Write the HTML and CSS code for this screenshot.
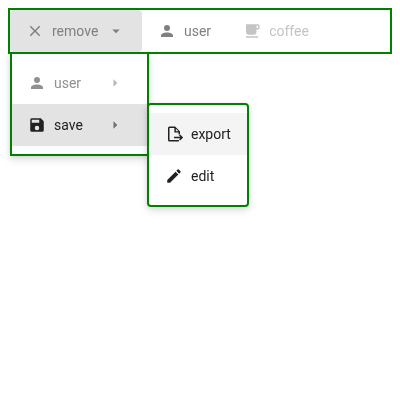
FILE: index.html
```
<!DOCTYPE html>
<html lang="en">
<head>
<meta charset="utf-8">
<title>Menu</title>
<link rel="stylesheet" href="styles.css">
</head>
<body>
<nav class="toolbar">
  <div class="item item--active">
    <svg class="icon" viewBox="0 0 24 24"><path d="M19 6.41L17.59 5 12 10.59 6.41 5 5 6.41 10.59 12 5 17.59 6.41 19 12 13.41 17.59 19 19 17.59 13.41 12z"/></svg>
    <span class="label">remove</span>
    <svg class="icon caret" viewBox="0 0 24 24"><path d="M7 10l5 5 5-5z"/></svg>
  </div>
  <div class="item">
    <svg class="icon" viewBox="0 0 24 24"><path d="M12 4a4 4 0 1 1 0 8 4 4 0 0 1 0-8m0 10c4.42 0 8 1.79 8 4v2H4v-2c0-2.21 3.58-4 8-4z"/></svg>
    <span class="label">user</span>
  </div>
  <div class="item item--disabled">
    <svg class="icon" viewBox="0 0 24 24"><path d="M4 19h16v2H4zM20 3H4v10a4 4 0 0 0 4 4h6a4 4 0 0 0 4-4v-3h2a2 2 0 0 0 2-2V5a2 2 0 0 0-2-2m0 5h-2V5h2z"/></svg>
    <span class="label">coffee</span>
  </div>
</nav>
<div class="menu menu--main">
  <div class="item item--muted">
    <svg class="icon" viewBox="0 0 24 24"><path d="M12 4a4 4 0 1 1 0 8 4 4 0 0 1 0-8m0 10c4.42 0 8 1.79 8 4v2H4v-2c0-2.21 3.58-4 8-4z"/></svg>
    <span class="label">user</span>
    <svg class="icon arrow" viewBox="0 0 24 24"><path d="M10 17l5-5-5-5z"/></svg>
  </div>
  <div class="item item--open">
    <svg class="icon" viewBox="0 0 24 24"><path d="M15 9H5V5h10m-3 14a3 3 0 1 1 0-6 3 3 0 0 1 0 6m5-16H5a2 2 0 0 0-2 2v14a2 2 0 0 0 2 2h14a2 2 0 0 0 2-2V7z"/></svg>
    <span class="label">save</span>
    <svg class="icon arrow" viewBox="0 0 24 24"><path d="M10 17l5-5-5-5z"/></svg>
  </div>
</div>
<div class="menu menu--sub">
  <div class="item item--hover">
    <svg class="icon" viewBox="0 0 24 24"><path d="M6 2a2 2 0 0 0-2 2v16a2 2 0 0 0 2 2h12.5v-2H6V4h6.5v6H18v2.5h2V8.5L13.5 2zM14.5 5L17.8 8.2H14.5zM20.2 12.5l-1.4 1.4 1.6 1.6H12v2h8.4l-1.6 1.6 1.4 1.4 4-4z"/></svg>
    <span class="label">export</span>
  </div>
  <div class="item">
    <svg class="icon" viewBox="0 0 24 24"><path d="M20.71 7.04c.39-.39.39-1.04 0-1.41l-2.34-2.34c-.37-.39-1.02-.39-1.41 0l-1.84 1.83 3.75 3.75M3 17.25V21h3.75L17.81 9.93l-3.75-3.75z"/></svg>
    <span class="label">edit</span>
  </div>
</div>
</body>
</html>
```
FILE: styles.css
```
* { box-sizing: border-box; }
body {
  margin: 8px;
  background: #fff;
  font: 14px/20px Roboto, sans-serif;
}
.toolbar {
  position: relative;
  z-index: 1;
  display: flex;
  height: 46px;
  border: 2px solid green;
  background: #fff;
  color: #808080;
}
.item {
  display: flex;
  align-items: center;
  gap: 8px;
  height: 42px;
  padding: 0 16px;
}
.icon {
  flex: none;
  width: 18px;
  height: 18px;
  fill: currentColor;
  overflow: visible;
}
.label { will-change: opacity; }
.item--active {
  width: 132px;
  border-radius: 4px;
  background: #e3e3e3;
}
.item--active .caret { margin-left: auto; margin-right: 1px; }
.item--disabled { color: #c4c4c4; }
.menu {
  position: absolute;
  padding: 8px 0;
  border: 2px solid green;
  background: #fff;
  color: #212121;
  box-shadow: 0 1px 5px rgba(0, 0, 0, 0.1), 0 4px 8px rgba(0, 0, 0, 0.1);
}
.menu--main {
  left: 10px;
  top: 52px;
  width: 139px;
}
.menu--main .arrow { margin-left: auto; margin-right: 7px; }
.item--muted { color: #909090; }
.item--muted .arrow { color: #b5b5b5; }
.item--open { background: #e3e3e3; }
.item--open .arrow { color: #6c6c6c; }
.menu--sub {
  left: 147px;
  top: 103px;
  z-index: 2;
  width: 102px;
  border-radius: 4px;
}
.item--hover { background: #f4f4f4; }
```
